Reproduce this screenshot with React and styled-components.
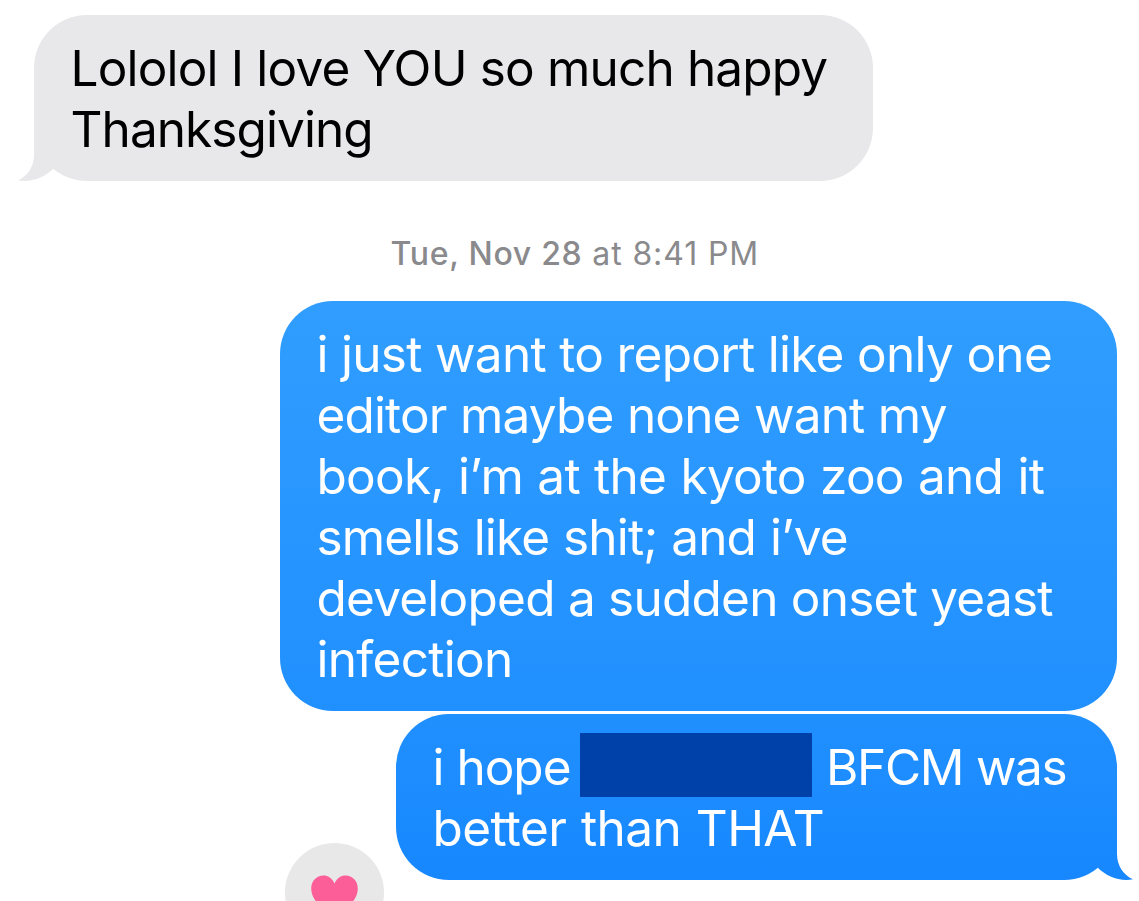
import React from 'react'
import styled, { createGlobalStyle } from 'styled-components'

const GlobalStyle = createGlobalStyle`
  body {
    margin: 0;
    background: #fff;
    overflow: hidden;
  }
`
const Thread = styled.main`
  display: flex;
  flex-direction: column;
  box-sizing: border-box;
  width: 1139px;
  height: 901px;
  padding: 15px 22px 0 34px;
  overflow: hidden;
  font-family: Inter, 'Liberation Sans', sans-serif;
`
const Bubble = styled.div`
  position: relative;
  flex: none;
  box-sizing: border-box;
  padding: 23px 36px 21px 36.5px;
  border-radius: 53px;
  font-size: 49.5px;
  line-height: 61px;
`
const Received = styled(Bubble)`
  align-self: flex-start;
  width: 839px;
  background: #e8e8ea;
  color: #000;
`
const Sent = styled(Bubble)`
  align-self: flex-end;
  width: ${props => props.$width}px;
  margin-bottom: 3px;
  background: linear-gradient(${props => props.$from}, ${props => props.$to});
  color: #fff;
`
const Line = styled.div`
  position: relative;
  height: 61px;
  white-space: pre;
  letter-spacing: ${props => props.$tracking || 0}px;
  word-spacing: ${props => props.$gap || 0}px;
`
const SplitLine = styled(Line)`
  display: flex;
  align-items: flex-start;
`
const Word = styled.span`
  flex: none;
  letter-spacing: ${props => props.$tracking || 0}px;
`
const FirstWord = styled(Word)`
  width: 147.5px;
`
const HiddenName = styled.span`
  flex: none;
  width: 232px;
  height: 64px;
  margin: -4px 14px 0 0;
  background: #0040a9;
`
const Timestamp = styled.time`
  flex: none;
  height: 40px;
  margin: 53px 0 27px 356.5px;
  color: #8a8a8d;
  font-size: 32px;
  line-height: 40px;
  white-space: pre;
  letter-spacing: 0.9px;
`
const Day = styled.b`
  font-weight: 550;
  letter-spacing: 0.7px;
`
const TailShape = styled.svg`
  position: absolute;
  top: 0;
  ${props =>
    props.$side === 'right'
      ? 'right: -16px; transform: scaleX(-1);'
      : 'left: -16px;'}
`
const Tapback = styled.div`
  display: flex;
  flex: none;
  justify-content: center;
  box-sizing: border-box;
  width: 99px;
  height: 99px;
  margin: -40px 0 0 251px;
  padding-top: 32px;
  border-radius: 50%;
  background: #e8e8e8;
`

const Tail = ({ side, from, to }) => (
  <TailShape $side={side} width='50' height='166' viewBox='0 0 50 166'>
    <defs>
      <linearGradient
        id={`tail-${side}`}
        gradientUnits='userSpaceOnUse'
        x1='0'
        y1='0'
        x2='0'
        y2='166'
      >
        <stop offset='0' stopColor={from} />
        <stop offset='1' stopColor={to} />
      </linearGradient>
    </defs>
    <path
      d='M16 100V140C16 151 10 161 0 165.3C13 168 27 162 35.2 153.7L50 140V100Z'
      fill={`url(#tail-${side})`}
    />
  </TailShape>
)

const Heart = () => (
  <svg width='47' height='44' viewBox='0 0 47 44'>
    <path
      d='M23.5 8.5C21 3 17 .5 12.5 .5C5.5 .5 .2 6 .2 13.5C.2 25 11 34 23.5 43C36 34 46.8 25 46.8 13.5C46.8 6 41.5 .5 34.5 .5C30 .5 26 3 23.5 8.5Z'
      fill='#fc5f98'
    />
  </svg>
)

const App = () => (
  <>
    <GlobalStyle />
    <Thread>
      <Received>
        <Tail side='left' from='#e8e8ea' to='#e8e8ea' />
        <Line $tracking={-0.83}>Lololol I love YOU so much happy</Line>
        <Line $tracking={-0.92}>Thanksgiving</Line>
      </Received>
      <Timestamp>
        <Day>Tue, Nov 28</Day> at 8:41 PM
      </Timestamp>
      <Sent $width={837} $from='#309dff' $to='#2090ff'>
        <Line $tracking={-0.7}>i just want to report like only one</Line>
        <Line $tracking={-0.85} $gap={0.4}>
          editor maybe none want my
        </Line>
        <Line $tracking={-0.75} $gap={1.1}>
          book, i’m at the kyoto zoo and it
        </Line>
        <Line $tracking={-0.85} $gap={0.8}>
          smells like shit; and i’ve
        </Line>
        <Line $tracking={-0.76}>developed a sudden onset yeast</Line>
        <Line $tracking={-0.7}>infection</Line>
      </Sent>
      <Sent $width={721} $from='#2090ff' $to='#1787ff'>
        <Tail side='right' from='#2090ff' to='#1787ff' />
        <SplitLine>
          <FirstWord $tracking={-1}>i hope</FirstWord>
          <HiddenName />
          <Word $tracking={-1.3}>BFCM was</Word>
        </SplitLine>
        <Line $tracking={-0.6} $gap={1.4}>
          better than THAT
        </Line>
      </Sent>
      <Tapback>
        <Heart />
      </Tapback>
    </Thread>
  </>
)

export default App
